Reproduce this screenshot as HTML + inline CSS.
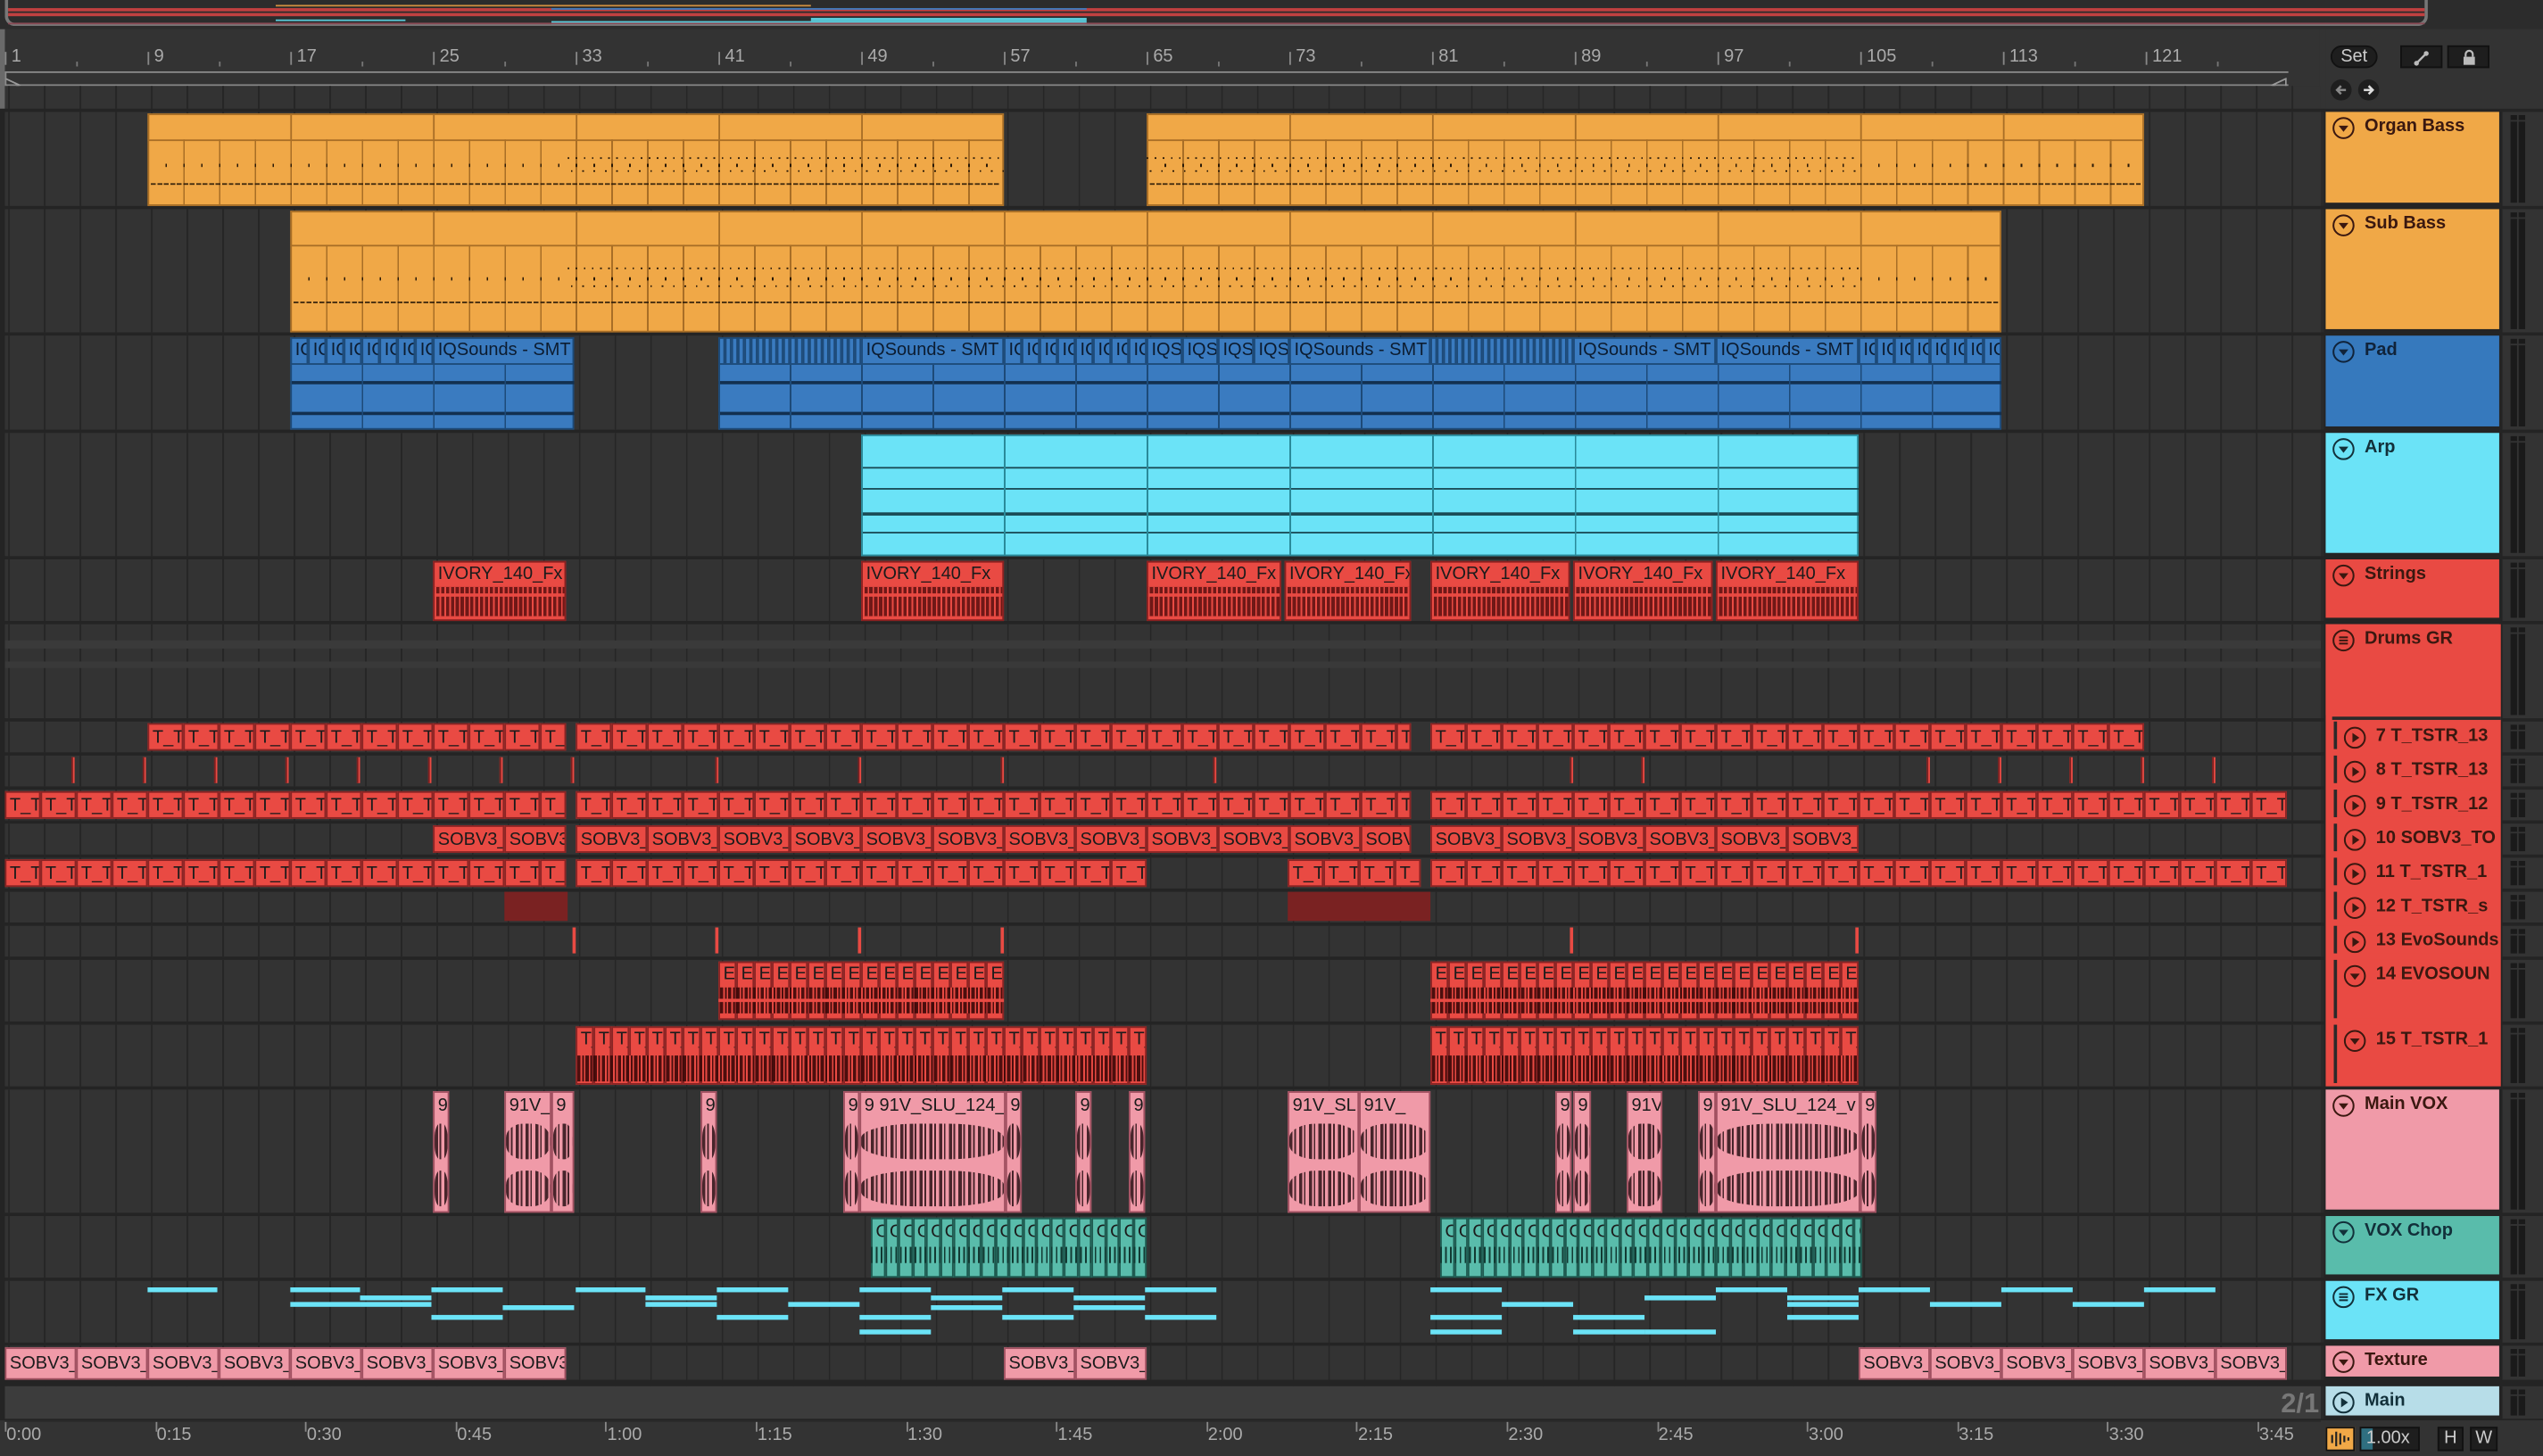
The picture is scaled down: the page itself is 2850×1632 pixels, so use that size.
<!DOCTYPE html>
<html><head><meta charset="utf-8">
<style>
html,body{margin:0;padding:0;background:#333;overflow:hidden;width:2850px;height:1632px}
#a{position:absolute;left:0;top:0;width:1568px;height:898px;transform:scale(1.81760,1.81737);transform-origin:0 0;background:#333;font-family:"Liberation Sans",sans-serif;overflow:hidden}
#a div{box-sizing:border-box}
.lb{font-size:10.5px;line-height:12px;color:#1b1b1b;white-space:nowrap;overflow:hidden;padding-left:2px}
.hd{font-size:11px;font-weight:bold;color:#2a1a0a;white-space:nowrap;overflow:hidden}
</style></head><body>
<div id="a"></div>
<script>
const R=document.getElementById('a');
function el(x,y,w,h,st,html){const d=document.createElement('div');d.style.cssText=`position:absolute;left:${x}px;top:${y}px;width:${w}px;height:${h}px;${st||''}`;if(html!==undefined)d.innerHTML=html;R.appendChild(d);return d;}
const X=b=>3+(b-1)*11;
// top overview
el(0,0,1568,18,'background:#2c2c2c');
el(3,0,1494,16,'border:2px solid #777;border-top:none;border-radius:0 0 6px 6px');
el(5,5,1490,1.5,'background:#c04040');el(5,8,1490,1.5,'background:#c04040');
el(170,3,330,1,'background:#d09040');el(340,5,330,1,'background:#3a7bc0');
el(170,12,80,1,'background:#5ac8d8');el(340,13,330,2,'background:#5ac8d8');el(500,11,170,2,'background:#5ac8d8');
el(5,14,1490,1,'background:#8a4a55');
// ruler
el(0,18,1430,50,'background:#333');
for(let n=1;n<=121;n+=8){const x=X(n);el(x,32,1,8,'background:#888');el(x+4,29,30,12,'font-size:11px;color:#aaa',String(n));el(x+44,38,1,3,'background:#777');}
el(3,44,1408,1,'background:#8a8a8a');el(3,52,1408,1,'background:#8a8a8a');
el(3,44,1,9,'background:#8a8a8a');
el(3,44,10,9,'',`<svg width="10" height="9"><path d="M0.5 0.5 L9 4.5 L0.5 8.5" fill="none" stroke="#999"/></svg>`);
el(1400,44,10,9,'',`<svg width="10" height="9"><path d="M9.5 0.5 L1 4.5 L9.5 8.5 Z" fill="none" stroke="#999"/></svg>`);
el(0,18,3,860,'background:#6a6a6a');
const grid='background-color:#333;background-image:repeating-linear-gradient(90deg,#262626 0 1px,transparent 1px 22px);background-position:2px 0';
el(3,53,1428,15,grid);
el(3,62,6,5,'',`<svg width="6" height="5"><path d="M0 0H6L0 5Z" fill="#4ac0e0"/></svg>`);
const rows=[
['Organ Bass',69,58,'#f0a847','v'],['Sub Bass',129,76,'#f0a847','v'],['Pad',207,58,'#3679bd','v'],['Arp',267,76,'#6be3f7','v'],
['Strings',345,38,'#e94a43','v'],['Drums GR',385,58,'#e94a43','g'],
['7 T_TSTR_13',445,19,'#e94a43','p',1],['8 T_TSTR_13',466,19,'#e94a43','p',1],['9 T_TSTR_12',487,19,'#e94a43','p',1],['10 SOBV3_TO',508,19,'#e94a43','p',1],
['11 T_TSTR_1',529,19,'#e94a43','p',1],['12 T_TSTR_s',550,19,'#e94a43','p',1],['13 EvoSounds',571,19,'#e94a43','p',1],['14 EVOSOUN',592,38,'#e94a43','v',1],['15 T_TSTR_1',632,38,'#e94a43','v',1],
['Main VOX',672,76,'#f09aa8','v'],['VOX Chop',750,38,'#59bcab','v'],['FX GR',790,38,'#6be3f7','g'],['Texture',830,21,'#f09aa8','v'],['Main',855,20,'#b7dde8','p']];
el(0,67,1568,810,'background:#242424');
rows.forEach(r=>{const [n,t,h,c,ic,sub]=r;
 el(3,t,1428,h,grid);
 el(1431,t,2,h,'background:#2a2a2a');
 el(1543,t,25,h,'background:#333');
 el(1548,t+2,4,h-4,'background:#1a1a1a');el(1553,t+2,4,h-4,'background:#1a1a1a');
 el(1548,t+5,9,1,'background:#333');
});
el(3,855,1428,20,'background:#3c3c3c');
el(1390,856,40,18,'font-size:17px;font-weight:bold;color:#777;text-align:right','2/1');
el(1434,385,108,285,'background:#e94a43');
function icon(type,col){
 let inner='';
 if(type==='v')inner=`<path d="M3.5 5H9.5L6.5 8.8Z" fill="${col}"/>`;
 else if(type==='p')inner=`<path d="M5 3.5V9.5L9.3 6.5Z" fill="${col}"/>`;
 else inner=`<path d="M3.8 4.6H9.2M3.8 6.5H9.2M3.8 8.4H9.2" stroke="${col}" stroke-width="1.1"/>`;
 return `<svg width="14" height="14" style="position:absolute;left:0;top:0"><circle cx="7" cy="7" r="6.2" fill="none" stroke="${col}" stroke-width="1.1"/><g transform="translate(0.5,0.5)">${inner}</g></svg>`;}
rows.forEach(r=>{const [n,t,h,c,ic,sub]=r;
 const x=sub?1439:1434, w=1541-x;
 const tc=(c==='#3679bd')?'#10233a':(c==='#6be3f7'||c==='#59bcab'||c==='#b7dde8')?'#12303a':'#3a1810';
 const hh=(n==='Drums GR')?56:h-2;
 const d=el(x,t,w,hh,`background:${c};${sub?'border-left:2px solid #2a2a2a;':''}`);
 d.innerHTML=`<div style="position:absolute;left:4px;top:3px;width:14px;height:14px">${icon(ic,tc)}</div><div class="hd" style="position:absolute;left:24px;top:3px;color:${tc};width:${w-25}px">${n}</div>`;
});
el(1438,442,104,2,'background:#2a2a2a');
el(1434,18,134,49,'background:#333');
el(1437,28,29,14,'background:#1e1e1e;border:1px solid #111;border-radius:7px;font-size:11px;color:#ccc;text-align:center;line-height:13px','Set');
el(1480,28,26,14,'background:#1e1e1e;border:1px solid #111','<svg width="24" height="12"><path d="M9 9L15 3" stroke="#bbb" stroke-width="1.3"/><circle cx="9" cy="9" r="1.5" fill="#bbb"/><circle cx="15" cy="3" r="1.5" fill="#bbb"/></svg>');
el(1509,28,26,14,'background:#1e1e1e;border:1px solid #111','<svg width="24" height="12"><rect x="9" y="5" width="7" height="5" fill="#bbb"/><path d="M10.3 5V3.5a2.2 2.2 0 0 1 4.4 0V5" fill="none" stroke="#bbb" stroke-width="1.2"/></svg>');
el(1437,49,13,13,'background:#1e1e1e;border-radius:7px','<svg width="13" height="13"><path d="M9.5 6.5H4M6.5 4L4 6.5L6.5 9" fill="none" stroke="#888" stroke-width="1.4"/></svg>');
el(1454,49,13,13,'background:#1e1e1e;border-radius:7px','<svg width="13" height="13"><path d="M3.5 6.5H9M6.5 4L9 6.5L6.5 9" fill="none" stroke="#ddd" stroke-width="1.4"/></svg>');
el(0,876,1568,22,'background:#333');
el(3,876,1428,1,'background:#2a2a2a');
const tl=['0:00','0:15','0:30','0:45','1:00','1:15','1:30','1:45','2:00','2:15','2:30','2:45','3:00','3:15','3:30','3:45'];
tl.forEach((s,i)=>{const x=3+i*92.6;el(x,877,1,6,'background:#888');el(x+1,879,40,12,'font-size:11px;color:#aaa',s);});
el(1434,880,18,15,'background:#f0a847;border:1px solid #111','<svg width="16" height="13"><path d="M3 4V9M5.5 2V11M8 3V10M10.5 4.5V8.5M13 5.5V7.5" stroke="#222" stroke-width="1.2"/></svg>');
el(1455,880,37,15,'background:#1e1e1e;border:1px solid #111;font-size:11px;color:#ccc;line-height:13px;padding-left:3px','<span style="position:absolute;left:0;top:0;width:7px;height:13px;background:#2f6f80"></span><span style="position:relative">1.00x</span>');
el(1503,880,16,15,'background:#1e1e1e;border:1px solid #111;font-size:11px;color:#ccc;text-align:center;line-height:13px','H');
el(1523,880,17,15,'background:#1e1e1e;border:1px solid #111;font-size:11px;color:#ccc;text-align:center;line-height:13px','W');

function clip(x0,x1,t,h,bg,bd,label,st,lh){return el(x0,t,x1-x0,h,`background:${bg};border:1px solid ${bd};${st||''}`,label?`<div class="lb" style="${lh?'line-height:'+lh+'px;font-size:11px':''}">${label}</div>`:'');}
function seq(x0,x1,step,t,h,bg,bd,label,st,lh){for(let x=x0;x<x1-0.5;x+=step){clip(x,Math.min(x+step,x1),t,h,bg,bd,label,st,lh);}}
const OR='#f0a847',OB='#a86e26';
function orange(x0,x1,t,h){
 el(x0,t,x1-x0,h,`background:${OR};border:1px solid ${OB}`);
 const th=Math.round(h*0.28);
 el(x0,t+th,x1-x0,1,'background:'+OB);
 el(x0,t+th,x1-x0,h-th,`background-image:repeating-linear-gradient(90deg,${OB} 0 1px,transparent 1px 22px);background-position:${((3-x0)%22+22)%22}px 0`);
 for(let x=x0;x<x1;x+=88)el(x,t,1,th,'background:'+OB);
 const ny=t+Math.round(h*0.75);
 el(x0+2,ny,x1-x0-4,1.3,'background-image:repeating-linear-gradient(90deg,#2a1a08 0 3px,transparent 3px 4px);opacity:.9');
 el(x0+2,t+Math.round(h*0.55),x1-x0-4,1.5,'background-image:repeating-linear-gradient(90deg,transparent 0 9px,#2a1a08 9px 10px,transparent 10px 11px)');
}
orange(91,619,70,57);orange(707,1322,70,57);
orange(179,1234,130,75);
[[350,619,72],[707,1146,72],[350,1146,132]].forEach(([a,b,t])=>{const H=t===72?55:73;
 el(a,t+H*0.45,b-a,1.3,'background-image:repeating-linear-gradient(90deg,#2a1a08 0 1px,transparent 1px 5px)');
 el(a,t+H*0.6,b-a,1.3,'background-image:repeating-linear-gradient(90deg,transparent 0 2px,#2a1a08 2px 3px,transparent 3px 7px)');});
const PB='#3a7bc0',PD='#1d4a78';
function pad(x0,x1,t,h,subs){
 el(x0,t,x1-x0,h,`background:${PB};border:1px solid ${PD}`);
 el(x0,t+16,x1-x0,1,'background:'+PD);el(x0,t+27,x1-x0,2,'background:#123050');el(x0,t+46,x1-x0,1.5,'background:#123050');
 el(x0,t+17,x1-x0,h-17,`background-image:repeating-linear-gradient(90deg,${PD} 0 1px,transparent 1px 44px);background-position:${(3-x0)%44}px 0`);
 subs.forEach(([a,b,l])=>{el(a,t,b-a,16,`border-left:1px solid ${PD};border-right:1px solid ${PD}`,`<div class="lb" style="line-height:16px;color:#0c1c30;font-size:11px">${l}</div>`);});
}
let ps=[];for(let x=179;x<267;x+=11)ps.push([x,x+11,'IQ']);ps.push([267,354,'IQSounds - SMT']);
pad(179,354,208,57,ps);
ps=[];for(let x=443;x<531;x+=4)ps.push([x,x+4,'|']);ps.push([531,619,'IQSounds - SMT']);for(let x=619;x<707;x+=11)ps.push([x,x+11,'IQ']);
for(let x=707;x<795;x+=22)ps.push([x,x+22,'IQS']);ps.push([795,882,'IQSounds - SMT']);for(let x=882;x<970;x+=4)ps.push([x,x+4,'|']);
ps.push([970,1058,'IQSounds - SMT']);ps.push([1058,1146,'IQSounds - SMT']);for(let x=1146;x<1234;x+=11)ps.push([x,x+11,'IQ']);
pad(443,1234,208,57,ps);
el(531,268,615,75,'background:#6be3f7;border:1px solid #2a8a9a');
[20,33,48,60].forEach(y=>el(531,268+y,615,y==48?2:1,'background:#1a4a55'));
el(531,268,615,75,'background-image:repeating-linear-gradient(90deg,#2a8a9a 0 1px,transparent 1px 88px)');
[[267,349],[531,619],[707,790],[792,870],[882,968],[970,1056],[1058,1146]].forEach(([a,b])=>{
 clip(a,b,346,37,'#e94a43','#8a2020','IVORY_140_Fx','',14);
 el(a+1,362,b-a-2,18,'background:#5a1010;background-image:repeating-linear-gradient(90deg,#e94a43 0 1px,transparent 1px 3px);opacity:.85');
 el(a+1,366,b-a-2,2,'background:#e94a43');
});
el(3,395,1428,5,'background:#3a3a3a');el(3,408,1428,4,'background:#393939');
const RD='#e94a43',RB='#8a2424';
seq(91,349,22,446,17,RD,RB,'T_T','',16);seq(355,870,22,446,17,RD,RB,'T_T','',16);seq(882,1322,22,446,17,RD,RB,'T_T','',16);
[44,88,132,176,220,264,308,352,441,529,617,748,968,1012,1188,1232,1276,1320,1364].forEach(x=>el(x,467,2,16,'background:#e94a43;border-left:1px solid #7a2020'));
seq(3,349,22,488,17,RD,RB,'T_T','',16);seq(355,870,22,488,17,RD,RB,'T_T','',16);seq(882,1410,22,488,17,RD,RB,'T_T','',16);
clip(267,311,509,17,RD,RB,'SOBV3_','',16);clip(311,349,509,17,RD,RB,'SOBV3','',16);seq(355,839,44,509,17,RD,RB,'SOBV3_','',16);clip(839,870,509,17,RD,RB,'SOBV','',16);seq(882,1146,44,509,17,RD,RB,'SOBV3_','',16);
seq(3,349,22,530,17,RD,RB,'T_T','',16);seq(355,707,22,530,17,RD,RB,'T_T','',16);seq(794,876,22,530,17,RD,RB,'T_T','',16);seq(882,1410,22,530,17,RD,RB,'T_T','',16);
el(311,550,39,18,'background:#7a2222');el(794,550,88,18,'background:#7a2222');
[353,441,529,617,968,1144].forEach(x=>el(x,572,2,16,'background:#e94a43'));
function wav(a,b,t,h){el(a+1,t,b-a-2,h,'background-image:repeating-linear-gradient(90deg,#3a0808 0 2px,#e94a43 2px 3px,#3a0808 3px 4px,transparent 4px 5px);opacity:.9');}
seq(443,619,11,593,36,RD,RB,'EVC','',14);seq(882,1146,11,593,36,RD,RB,'EVC','',14);
wav(443,619,609,16);wav(882,1146,609,16);el(443,616,176,2,'background:#e94a43');el(882,616,264,2,'background:#e94a43');
seq(355,707,11,633,36,RD,RB,'T_T','',14);seq(882,1146,11,633,36,RD,RB,'T_T','',14);
wav(355,707,651,16);wav(882,1146,651,16);
const PK='#f09aa8',PKB='#a05060';
[[267,277,'9'],[311,340,'91V_S'],[340,354,'9'],[432,442,'9'],[520,530,'9'],[530,620,'9 91V_SLU_124_v'],[620,630,'9'],[663,673,'9'],[696,706,'9'],[794,838,'91V_SL'],[838,882,'91V_'],[959,969,'9'],[970,981,'9'],[1003,1025,'91V'],[1047,1058,'9'],[1058,1147,'91V_SLU_124_v'],[1147,1157,'9']].forEach(([a,b,l])=>{
 clip(a,b,673,75,PK,PKB,l,'',16);
 el(a+1,693,b-a-2,22,'background-image:repeating-linear-gradient(90deg,#2a1015 0 2px,transparent 2px 3px,#2a1015 3px 4px,transparent 4px 6px);opacity:.85;border-radius:40%');
 el(a+1,722,b-a-2,22,'background-image:repeating-linear-gradient(90deg,#2a1015 0 2px,transparent 2px 3px,#2a1015 3px 4px,transparent 4px 6px);opacity:.85;border-radius:40%');
});
seq(537,707,8.5,751,37,'#59bcab','#1e5a50','O','',16);seq(888,1148,8.5,751,37,'#59bcab','#1e5a50','O','',16);
el(537,769,170,10,'background-image:repeating-linear-gradient(90deg,#123a33 0 1px,transparent 1px 3px)');
el(888,769,260,10,'background-image:repeating-linear-gradient(90deg,#123a33 0 1px,transparent 1px 3px)');
const CY='#6be3f7';
[[91,134,794],[179,222,794],[179,222,803],[222,266,799],[222,266,803],[266,310,794],[266,310,811],[310,354,805],[355,398,794],[398,442,799],[398,442,803],[442,486,794],[442,486,811],[486,530,803],[530,574,794],[530,574,811],[530,574,820],[574,618,799],[574,618,805],[618,662,794],[618,662,811],[662,706,799],[662,706,805],[706,750,794],[706,750,811],[882,926,794],[882,926,811],[882,926,820],[926,970,803],[970,1014,811],[970,1014,820],[1014,1058,799],[1014,1058,820],[1058,1102,794],[1102,1146,799],[1102,1146,803],[1102,1146,811],[1146,1190,794],[1190,1234,803],[1234,1278,794],[1278,1322,803],[1322,1366,794]].forEach(([a,b,y])=>el(a,y,b-a,2.5,'background:'+CY));
seq(3,349,44,831,20,PK,PKB,'SOBV3_','',18);seq(619,707,44,831,20,PK,PKB,'SOBV3_','',18);seq(1146,1410,44,831,20,PK,PKB,'SOBV3_','',18);
</script>
</body></html>
